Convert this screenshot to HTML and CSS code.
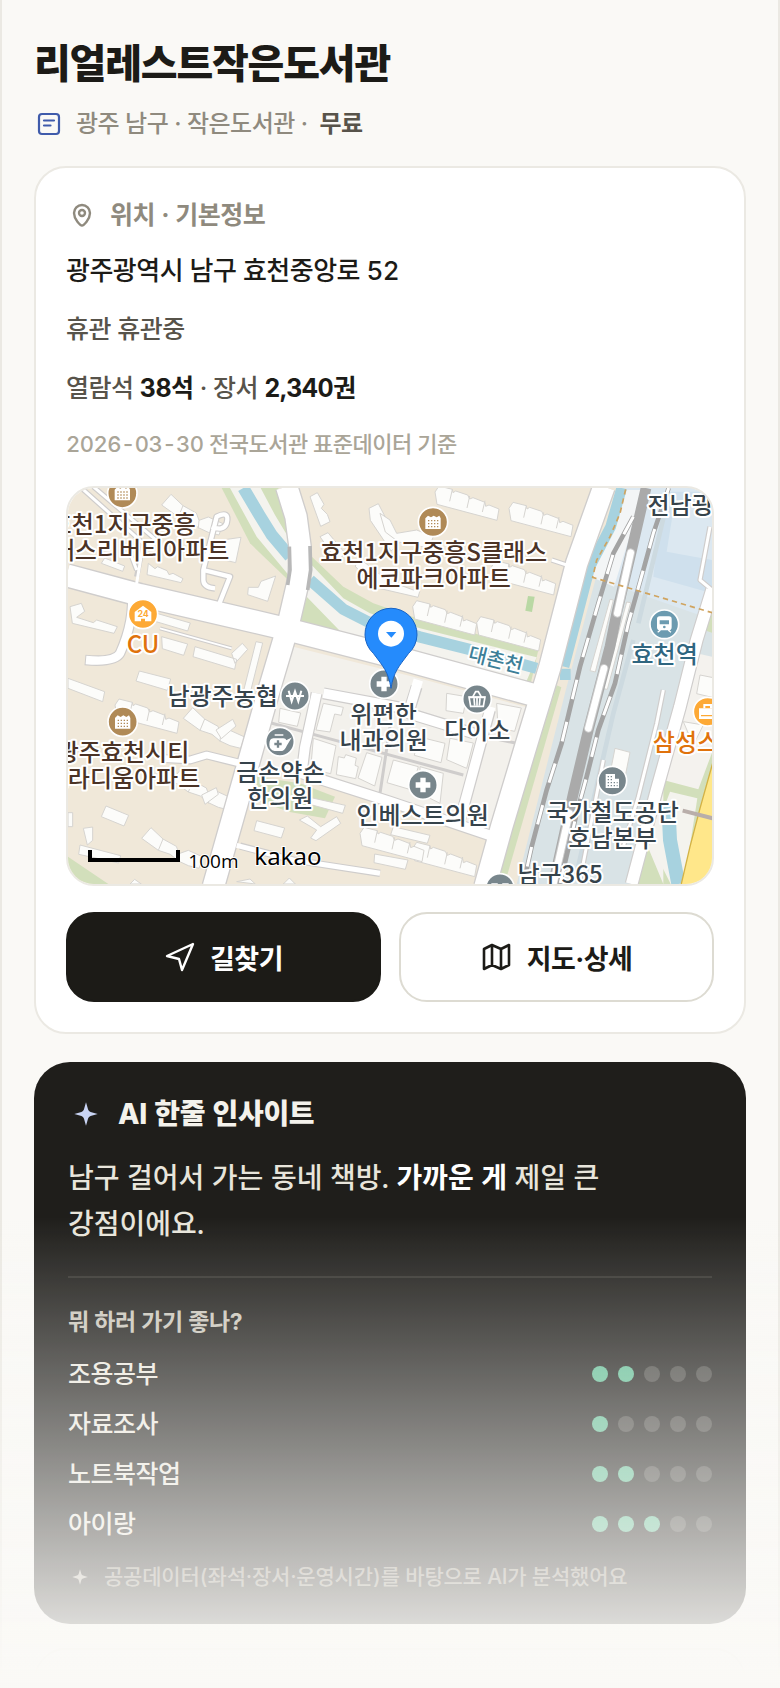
FILE: index.html
```html
<!DOCTYPE html>
<html lang="ko">
<head>
    <meta charset="UTF-8">
    <meta name="viewport" content="width=device-width, initial-scale=1">
    <title>리얼레스트작은도서관</title>
    <link rel="stylesheet" href="styles.css">
</head>
<body>
<main class="page">
    <h1 class="title">리얼레스트작은도서관</h1>
    <div class="sub">
        <svg class="sub_icon" viewBox="0 0 30 30" fill="none" stroke="#3f5bab" stroke-width="2.200" stroke-linecap="round">
            <rect x="5" y="5" width="20" height="20" rx="3"/>
            <path d="M10 11.500h10M10 16.500h6.500"/>
        </svg>
        <span>광주 남구 · 작은도서관 ·&nbsp; <b class="free">무료</b></span>
    </div>

    <section class="card">
        <h2 class="card_head">
            <svg class="head_icon" viewBox="0 0 32 32" fill="none" stroke="#8f8a7e" stroke-width="2.400">
                <path d="M16 26.500c-1.500 0-8-6-8-12.500a8 8 0 0 1 16 0c0 6.500-6.500 12.500-8 12.500z"/>
                <circle cx="16" cy="14" r="3"/>
            </svg>
            위치 · 기본정보
        </h2>
        <p class="line address">광주광역시 남구 효천중앙로 52</p>
        <p class="line">휴관 휴관중</p>
        <p class="line">열람석 <b>38석</b> · 장서 <b>2,340권</b></p>
        <p class="date">2026-03-30 전국도서관 표준데이터 기준</p>

        <div class="map">
            <svg class="map_svg" viewBox="24 24 1932 1188">
                <defs>
                    <g id="apt">
                        <circle r="44" fill="#b08a57" stroke="#fff" stroke-width="5"/>
                        <path d="M-23 21v-32l8-8 9 5 8-5 9 5 8-5 4 8v32z" fill="#fff"/>
                        <path d="M-15-4h32M-15 5h32M-15 14h32" stroke="#b08a57" stroke-width="4" stroke-dasharray="4 5"/>
                    </g>
                    <g id="plus">
                        <circle r="43" fill="#78868c" stroke="#fff" stroke-width="5"/>
                        <path d="M0-22v44M-22 0h44" stroke="#fff" stroke-width="16"/>
                    </g>
                    <path id="houses" d="M0 0l12-18 40 10 2 10 8-5 36 12 6 12 10-4 36 14 2 12 10-4 30 12-6 34-180-48zM52-8l-8 36M104 12l-8 36M150 26l-8 34"/>
                    <path id="cluster" d="M0 0l28-32 36 34 40 22 8 22 28-10 44 20-12 34-32-8-30-14-24-20-36-12zM64 2l-14 34M112 46l-2 24"/>
                </defs>
                <rect x="0" y="0" width="2000" height="1300" fill="#f0e8d9"/>

                <!-- stream and banks, west of the railway -->
                <path d="M485 24H655L700 220 690 305 570 190z" fill="#d2dfbb"/>
                <path d="M510 24H602L645 105 690 180V290L590 170z" fill="#f4f3ee"/>
                <path d="M550 24L598 105 635 165 690 230" fill="none" stroke="#a7d2df" stroke-width="36"/>
                <path d="M750 225L850 320 940 370 1070 415 1435 510 1410 620 900 490 715 436 750 320z" fill="#d2dfbb"/>
                <path d="M755 255L850 355 930 400 1080 445 1430 532 1400 602 950 486 845 458 735 345z" fill="#f4f3ee"/>
                <path d="M750 300L850 388 925 426 1080 471 1235 510 1430 565" fill="none" stroke="#a7d2df" stroke-width="34"/>
                <path d="M24 1130L145 1212H24z" fill="#d2dfbb"/>

                <!-- railway and campus ground -->
                <path d="M1680 24H1960V700L1800 1212H1370L1520 620z" fill="#d9e3e6"/>
                <path d="M1697 24H1960V420L1596 292z" fill="#dce8f1"/>
                <path d="M1697 30h55l-90 290-66-28z" fill="#f3f5f6"/>
                <path d="M1810 35H1956V340L1780 290z" fill="#cfe0ed"/>
                <path d="M1845 60H1956V240L1820 215z" fill="#dce8f1"/>
                <path d="M1810 115L1735 430M1720 480L1660 700 1550 1180" fill="none" stroke="#cddae0" stroke-width="14"/>
                <path d="M1685 24L1652 140 1590 260 1512 560" fill="none" stroke="#a7d2df" stroke-width="32"/>
                <path d="M1500 583h32" stroke="#a7d2df" stroke-width="34"/>
                <path d="M1490 616l14 6-170 590h-30z" fill="#d2dfbb"/>

                <!-- blocks on the south east -->
                <path d="M1910 520L1956 530V1212H1730z" fill="#f4f2ee"/>
                <path d="M1810 900l105 28 41-110v80l-80 314H1730l30-120 50 120z" fill="#d2dfbb"/>
                <path d="M1830 935l82 20-40 257h-40l-60-120z" fill="#f4f3ee"/>
                <path d="M1825 975L1830 1080 1855 1212" fill="none" stroke="#a7d2df" stroke-width="42"/>
                <path d="M1962 835L1920 985 1890 1100 1862 1220H1962z" fill="#ffe78a" stroke="#d3b246" stroke-width="4"/>
                <path d="M1868 992l95 24" stroke="#b9aeaa" stroke-width="12"/>
                <path d="M1945 400l15-10v70l-28-10z" fill="#d2dfbb"/>

                <!-- centre block -->
                <path d="M700 500L1060 590 1412 685 1290 1050 1000 955 560 848z" fill="#f3f1ec"/>
                <path d="M590 890l130 20 105 40-30 65-110-20-95-35z" fill="#d2dfbb"/>
                <path d="M600 720L860 790 1210 885M990 740L960 940M1180 750l190 40" fill="none" stroke="#cfcdcc" stroke-width="9"/>

                <!-- buildings -->
                <g fill="#fcfcfa" stroke="#d6d4d0" stroke-width="3">
                    <use href="#houses" x="1125" y="36"/>
                    <use href="#houses" x="1347" y="85"/>
                    <use href="#houses" x="1295" y="260"/>
                    <use href="#houses" x="1058" y="380"/>
                    <use href="#houses" x="1250" y="428"/>
                    <use href="#houses" x="165" y="675"/>
                    <use href="#houses" x="1058" y="1105"/>
                    <use href="#houses" x="900" y="1060"/>
                    <use href="#cluster" x="305" y="75"/>
                    <use href="#cluster" x="370" y="715"/>
                    <use href="#cluster" x="245" y="1075"/>
                    <use href="#cluster" x="335" y="900"/>
                    <path d="M750 50l22-12 20 35-8 12 18 18 8 22-28 14zM927 85l28-14 62 120-24 22-62-92zM780 170l24-12 50 60-20 30z"/>
                    <path d="M885 258l20-18 75 60 80 30 24-12-10 34-130-30zM960 100l30 20 20 40 60-10 50 20-14 34-90-18-40-30z"/>
                    <path d="M487 180l56-8-16 76-50-12zM565 322l30 0 8-18 44-16-24 76-60-20zM124 250l10-16 60 24-6 16z"/>
                    <path d="M30 380l34-10 10 24-24 18 50 16 10-8 62 20-10 20-125-30zM273 395l118 34-8 24-115-34z"/>
                    <path d="M265 250l20 16 8-6 28 12 6 12 12-4 30 16-6 12-102-24zM305 470l78 22-12 34-64-20zM405 500l125 38-6 30-125-38zM515 520l32-30 16 18-38 42z"/>
                    <path d="M588 485l20 4-40 160-20-6zM238 573l94 24-10 34-94-28zM24 595l110 40-6 30-104-40z"/>
                    <path d="M468 750l50-32 10 20-44 38zM425 945l44-22 6 20-40 30zM138 978l68 28-14 32-68-28zM70 1045l28-4v40l-16 14zM24 998h14v42H24z"/>
                    <path d="M590 1022l84 22-10 30-82-22zM718 1020l24-12 40 32 48-30 12 20-74 52-16-8 18-24zM740 950l116 26-8 24-110-30z"/>
                    <path d="M60 1095l122 32-6 22-120-26zM944 1122l100 18-8 28-94-20z"/>
                    <path d="M660 685l62 14-10 40-56-12zM790 670l60 12-6 24-20-4-14 54-42-6zM760 775l68 22-16 84-60-14zM835 830l18 4 4-10 32 10-4 22 10 4-8 36-58-12z"/>
                    <path d="M920 818l46 14-22 86-50-24zM1000 840l75 20-20 70-74-22zM1080 860l70 20-10 90-60-30zM1075 770l80 20-12 58-80-22zM1160 640l60 10-10 50-52-8z"/>
                    <path d="M1310 670l74 14-20 70-50-10zM1170 775l70 14-20 76-60-26zM1000 1040l110 26-8 24-110-26z"/>
                    <path d="M1665 805l45 12-22 110-45-10zM1650 358l10 2-54 216-16-4zM1700 366l12 2-70 260-12-2z"/>
                    <path d="M530 1205l40-8 16 15zM670 1212l18-18 18 18zM210 1212l14-14 20 14zM1920 585l40 8v60l-50-12zM1870 725l60 10-30 60z"/>
                </g>
                <path d="M1404 348l20 2-8 46-20-4z" fill="#b9d8a4"/>

                <!-- road outlines, then the white surface -->
                <g fill="none" stroke="#cfcdcc" stroke-linejoin="round">
                    <path d="M20 286L240 345 650 440 1000 530 1440 650" stroke-width="74"/>
                    <path d="M680 20L708 110 720 200 718 290 682 445 630 620 565 850 460 1220" stroke-width="72"/>
                    <path d="M1632 20L1550 250 1470 560 1400 790 1325 1040 1275 1220" stroke-width="72"/>
                    <path d="M215 330Q225 420 180 520Q165 548 75 540" stroke-width="32"/>
                    <path d="M540 850L440 825 390 840 300 835" stroke-width="27"/>
                    <path d="M770 640L735 800 725 880 990 965 1300 1070M790 640L1060 690M1070 620L1045 700 1240 760M1290 690L1200 1020" stroke-width="36"/>
                    <path d="M540 1098L700 1140 960 1180" stroke-width="22"/>
                    <path d="M470 390L510 290 430 270V300Q430 322 465 325M430 270L470 110Q510 90 500 130 490 155 455 140" stroke-width="20"/>
                    <path d="M60 20L250 190 230 290M230 270L215 230M100 20L300 190" stroke-width="16"/>
                    <path d="M1956 330L1910 480 1860 680 1790 930 1715 1212" stroke-width="42"/>
                    <path d="M1810 630L1790 730 1735 950 1690 1100M1630 840L1560 1200M1950 140L1920 300 1956 330M1475 240L1520 255" stroke-width="16"/>
                </g>
                <g fill="none" stroke="#fff" stroke-linejoin="round">
                    <path d="M20 286L240 345 650 440 1000 530 1440 650" stroke-width="66"/>
                    <path d="M680 20L708 110 720 200 718 290 682 445 630 620 565 850 460 1220" stroke-width="64"/>
                    <path d="M1632 20L1550 250 1470 560 1400 790 1325 1040 1275 1220" stroke-width="64"/>
                    <path d="M215 325Q225 420 180 520Q165 548 78 540" stroke-width="25"/>
                    <path d="M550 852L440 825 390 840 300 835" stroke-width="20"/>
                    <path d="M770 640L735 800 725 880 990 965 1310 1073M790 640L1060 690M1075 600L1045 700 1240 760M1292 680L1200 1020" stroke-width="29"/>
                    <path d="M530 1096L700 1140 960 1180" stroke-width="15"/>
                    <path d="M468 396L510 290 430 270V300Q430 322 465 325M430 270L470 110Q510 90 500 130 490 155 455 140" stroke-width="13"/>
                    <path d="M60 20L250 190 230 310M230 270L215 230M100 20L300 190" stroke-width="9"/>
                    <path d="M1956 330L1910 480 1860 680 1790 930 1715 1212" stroke-width="35"/>
                    <path d="M1810 630L1790 730 1735 950 1690 1100M1630 840L1560 1200M1950 140L1920 300 1956 330M1475 240L1520 255" stroke-width="9"/>
                </g>
                <path d="M688 200L690 270 683 315M750 198L752 270 743 330" fill="none" stroke="#b8b8b8" stroke-width="11"/>
                <path d="M300 445L515 505" stroke="#cfcdcc" stroke-width="12"/>
                <path d="M300 445L515 505" stroke="#fff" stroke-width="5"/>

                <!-- rails -->
                <g fill="none">
                    <path d="M1758 24L1715 210 1670 400 1650 500 1585 750 1540 940 1480 1212" stroke="#aaa" stroke-width="32"/>
                    <path d="M1712 218L1672 400M1632 565L1585 745M1528 1000L1480 1212" stroke="#ccc" stroke-width="26" stroke-linecap="round"/>
                    <path d="M1712 218L1672 400M1632 565L1585 745M1528 1000L1480 1212" stroke="#fff" stroke-width="20" stroke-linecap="round"/>
                    <path d="M1720 110L1660 220 1615 370 1560 560 1505 790 1460 930 1415 1100 1390 1212M1826 24L1780 160 1750 270 1705 430 1665 610 1615 750 1580 890 1550 1000 1500 1212" stroke="#a3a3a3" stroke-width="14"/>
                    <path d="M1720 110L1660 220 1615 370 1560 560 1505 790 1460 930 1415 1100 1390 1212M1826 24L1780 160 1750 270 1705 430 1665 610 1615 750 1580 890 1550 1000 1500 1212" stroke="#fff" stroke-width="9" stroke-dasharray="60 70"/>
                    <path d="M1697 28L1680 100 1650 170 1610 240 1598 292 1956 398" stroke="#d0a460" stroke-width="5" stroke-dasharray="16 12"/>
                </g>

                <!-- place marks -->
                <use href="#apt" x="187" y="40"/>
                <use href="#apt" x="1119" y="126"/>
                <use href="#apt" x="188" y="725"/>
                <use href="#plus" x="972" y="612"/>
                <use href="#plus" x="1089" y="915"/>
                <g transform="translate(249 402)">
                    <circle r="44" fill="#fda935" stroke="#fff" stroke-width="5"/>
                    <path d="M-25 22v-28L0-25 25-6v28H6V14H-6v8z" fill="#fff"/>
                    <text class="mark_24" y="10">24</text>
                </g>
                <g transform="translate(705 648)">
                    <circle r="43" fill="#78868c" stroke="#fff" stroke-width="5"/>
                    <path d="M-19-16l9 32L0-14l10 30 9-32M-27 0h54" fill="none" stroke="#fff" stroke-width="6"/>
                </g>
                <g transform="translate(660 785)">
                    <circle r="43" fill="#78868c" stroke="#fff" stroke-width="5"/>
                    <path d="M-20-8h30q6 0 8 6l12-6-12 20q-6 14-14 14h-20q-14-2-14-18 0-16 10-16zM-16-20H10" fill="#fff" stroke="#fff" stroke-width="4"/>
                    <path d="M-6-4v22M-17 7H5" stroke="#78868c" stroke-width="7"/>
                </g>
                <g transform="translate(1251 657)">
                    <circle r="43" fill="#78868c" stroke="#fff" stroke-width="5"/>
                    <path d="M-24-6h48l-5 28h-38zM-14-4L-4-22H4L14-4" fill="none" stroke="#fff" stroke-width="5"/>
                    <path d="M-9-2l2 22M0-2v22M9-2L7 20M-24-5h48" stroke="#fff" stroke-width="5"/>
                </g>
                <g transform="translate(1657 902)">
                    <circle r="43" fill="#78868c" stroke="#fff" stroke-width="5"/>
                    <path d="M-20 22v-42H8v14h12v28z" fill="#fff"/>
                    <path d="M-14-12H4M-14-3H4M-14 6h30M-14 15h30" stroke="#78868c" stroke-width="4" stroke-dasharray="4 5"/>
                </g>
                <g transform="translate(1813 433)">
                    <circle r="43" fill="#6c9bb0" stroke="#fff" stroke-width="5"/>
                    <path d="M-14-22h28q6 0 6 6v24q0 8-7 8h-26q-7 0-7-8v-24q0-6 6-6zM-12 18l-8 6M12 18l8 6" fill="#fff" stroke="#fff" stroke-width="4"/>
                    <path d="M-14-12h28v12h-28z" fill="#6c9bb0"/>
                    <circle cy="8" r="4" fill="#6c9bb0"/>
                </g>
                <g transform="translate(1943 695)">
                    <circle r="43" fill="#fda935" stroke="#fff" stroke-width="5"/>
                    <path d="M-10-10v-10h20v10" fill="none" stroke="#fff" stroke-width="6"/>
                    <path d="M-26-10h52v32h-52z" fill="#fff"/>
                    <path d="M-20 12h40" stroke="#fda935" stroke-width="4"/>
                </g>
                <g transform="translate(1320 1224)">
                    <circle r="43" fill="#78868c" stroke="#fff" stroke-width="5"/>
                    <path d="M-26-14h18l8 6 8-6h18v20h-52z" fill="#fff"/>
                </g>

                <g class="label brown">
                    <text x="188" y="158">효천1지구중흥</text>
                    <text x="188" y="236">S클래스리버티아파트</text>
                    <text x="1121" y="244">효천1지구중흥S클래스</text>
                    <text x="1121" y="322">에코파크아파트</text>
                    <text x="189" y="844">광주효천시티</text>
                    <text x="189" y="922">프라디움아파트</text>
                </g>
                <g class="label slate">
                    <text x="488" y="674">남광주농협</text>
                    <text x="971" y="728">위편한</text>
                    <text x="971" y="806">내과의원</text>
                    <text x="1252" y="776">다이소</text>
                    <text x="661" y="904">금손약손</text>
                    <text x="661" y="982">한의원</text>
                    <text x="1088" y="1032">인베스트의원</text>
                    <text x="1658" y="1022">국가철도공단</text>
                    <text x="1658" y="1100">호남본부</text>
                    <text x="1500" y="1210">남구365</text>
                    <text x="1895" y="103">전남광주</text>
                </g>
                <g class="label orange">
                    <text x="249" y="519">CU</text>
                    <text x="1944" y="814">삼성스토어</text>
                </g>
                <text class="label teal" x="1814" y="550">효천역</text>
                <text class="label water" transform="translate(1302 560) rotate(14)">대촌천</text>

                <!-- selected place -->
                <path d="M993 625C985 575 970 560 940 520A78 78 0 1 1 1046 520C1016 560 1001 575 993 625z" fill="#258bfc" stroke="#1763c6" stroke-width="3"/>
                <circle cx="993" cy="461" r="39" fill="#fff"/>
                <path d="M978 456h31l-15 17z" fill="#258bfc"/>

                <path d="M90 1110v30h264v-30" fill="none" stroke="#000" stroke-width="12"/>
                <text class="scale" x="385" y="1163">100m</text>
                <text class="kakao" x="583" y="1156">kakao</text>
            </svg>
        </div>

        <div class="actions">
            <button class="btn btn_dark" type="button">
                <svg class="btn_icon" viewBox="0 0 32 32" fill="none" stroke="#fff" stroke-width="2.400" stroke-linejoin="round">
                    <path d="M29 3L3 15l12 3 3 11z"/>
                </svg>
                길찾기
            </button>
            <button class="btn" type="button">
                <svg class="btn_icon" viewBox="0 0 32 32" fill="none" stroke="#1c1b17" stroke-width="2.600" stroke-linejoin="round">
                    <path d="M3 8l8-4 9 4 8-4v20l-8 4-9-4-8 4zM11 4v20M20 8v20"/>
                </svg>
                지도·상세
            </button>
        </div>
    </section>

    <section class="insight">
        <h2 class="insight_head">
            <svg class="star" viewBox="0 0 36 36" fill="#c9d4f4">
                <path d="M18 4l2.500 8.500q.7 2.300 3 3L32 18l-8.500 2.500q-2.300.7-3 3L18 32l-2.500-8.500q-.7-2.300-3-3L4 18l8.500-2.500q2.300-.7 3-3z"/>
            </svg>
            AI 한줄 인사이트
        </h2>
        <p class="insight_text">남구 걸어서 가는 동네 책방. <b>가까운 게</b> 제일 큰 강점이에요.</p>
        <h3 class="fit_head">뭐 하러 가기 좋나?</h3>
        <ul class="fit">
            <li class="fit_row">조용공부 <span class="dots"><i class="dot on"></i><i class="dot on"></i><i class="dot"></i><i class="dot"></i><i class="dot"></i></span></li>
            <li class="fit_row">자료조사 <span class="dots"><i class="dot on"></i><i class="dot"></i><i class="dot"></i><i class="dot"></i><i class="dot"></i></span></li>
            <li class="fit_row">노트북작업 <span class="dots"><i class="dot on"></i><i class="dot on"></i><i class="dot"></i><i class="dot"></i><i class="dot"></i></span></li>
            <li class="fit_row">아이랑 <span class="dots"><i class="dot on"></i><i class="dot on"></i><i class="dot on"></i><i class="dot"></i><i class="dot"></i></span></li>
        </ul>
        <p class="source">
            <svg class="source_star" viewBox="0 0 36 36" fill="#b5b1a6">
                <path d="M18 4l2.500 8.500q.7 2.300 3 3L32 18l-8.500 2.500q-2.300.7-3 3L18 32l-2.500-8.500q-.7-2.300-3-3L4 18l8.500-2.500q2.300-.7 3-3z"/>
            </svg>
            공공데이터(좌석·장서·운영시간)를 바탕으로 AI가 분석했어요
        </p>
    </section>

    <section class="card next"></section>
</main>
<div class="fade"></div>
</body>
</html>
```
FILE: styles.css
```css
*{
    box-sizing: border-box;
}
body{
    margin: 0;
    background-color: #faf9f6;
    color: #1c1b17;
    font-family: Inter, "Noto Sans CJK KR", sans-serif;
    font-size: 25px;
    font-weight: 500;
    font-variant-numeric: tabular-nums;
}
h1, h2, h3, p, ul{
    margin: 0;
    padding: 0;
}
.page{
    height: 100vh;
    overflow: hidden;
    padding: 38px 32px 0;
    border-left: 2px solid #ebe9e3;
    border-right: 2px solid #ebe9e3;
    letter-spacing: -0.02em;
}
.title{
    font-size: 40px;
    line-height: 52px;
    font-weight: 800;
    letter-spacing: -0.03em;
}
.sub{
    display: flex;
    align-items: center;
    gap: 12px;
    margin-top: 16px;
    font-size: 24px;
    line-height: 36px;
    color: #8f8a7e;
}
.sub_icon{
    width: 30px;
    height: 30px;
}
.free{
    font-weight: 600;
    color: #57534a;
}
.card{
    margin-top: 24px;
    padding: 30px;
    border: 2px solid #ebe9e3;
    border-radius: 32px;
    background-color: #fff;
}
.card_head{
    display: flex;
    align-items: center;
    gap: 12px;
    margin-bottom: 9px;
    font-size: 25px;
    line-height: 34px;
    font-weight: 700;
    color: #8f8a7e;
}
.head_icon{
    width: 32px;
    height: 32px;
}
.line{
    line-height: 59px;
    color: #57534a;
}
.line b{
    font-weight: 700;
    color: #1c1b17;
}
.address{
    font-size: 26px;
    color: #1c1b17;
}
.date{
    margin-top: 9px;
    font-size: 22px;
    line-height: 34px;
    color: #aaa598;
}
.map{
    margin-top: 25px;
    border: 2px solid #ebe9e3;
    border-radius: 28px;
    overflow: hidden;
}
.map_svg{
    display: block;
    width: 100%;
}
.label{
    font-family: "Noto Sans CJK KR", sans-serif;
    font-size: 72px;
    font-weight: 500;
    letter-spacing: 0;
    text-anchor: middle;
    paint-order: stroke;
    stroke: #fff;
    stroke-width: 12px;
    stroke-linejoin: round;
}
.brown{
    fill: #4b3326;
}
.slate{
    fill: #36434b;
}
.orange{
    fill: #e0720c;
}
.teal{
    fill: #2f6680;
}
.water{
    fill: #3d7f98;
    font-size: 60px;
}
.mark_24{
    font-size: 26px;
    font-weight: 700;
    letter-spacing: 0;
    text-anchor: middle;
    fill: #fda935;
}
.scale{
    font-family: "Open Sans", sans-serif;
    font-size: 57px;
    font-weight: 400;
    letter-spacing: 0;
    paint-order: stroke;
    stroke: #fff;
    stroke-width: 6px;
}
.kakao{
    font-family: "Noto Sans", sans-serif;
    font-size: 72px;
    font-weight: 400;
    letter-spacing: 0;
    paint-order: stroke;
    stroke: #fff;
    stroke-width: 6px;
}
.actions{
    display: grid;
    grid-template-columns: 1fr 1fr;
    gap: 18px;
    margin-top: 26px;
}
.btn{
    display: flex;
    align-items: center;
    justify-content: center;
    gap: 14px;
    height: 90px;
    border: 2px solid #dddbd2;
    border-radius: 28px;
    background-color: #fff;
    color: #1c1b17;
    font-family: inherit;
    font-size: 27px;
    font-weight: 700;
    letter-spacing: -0.02em;
}
.btn_dark{
    border-color: #1c1b17;
    background-color: #1c1b17;
    color: #fff;
}
.btn_icon{
    width: 32px;
    height: 32px;
}
.insight{
    margin-top: 28px;
    padding: 35px 34px 32px;
    border-radius: 36px;
    background-color: #1f1e1b;
    color: #f4f2ec;
}
.insight_head{
    display: flex;
    align-items: center;
    gap: 14px;
    font-size: 28px;
    line-height: 34px;
    font-weight: 800;
    letter-spacing: -0.01em;
}
.star{
    width: 36px;
    height: 30px;
}
.insight_text{
    margin-top: 24px;
    padding-bottom: 29px;
    border-bottom: 2px solid #34332f;
    font-size: 28px;
    line-height: 46px;
    letter-spacing: 0;
    word-break: keep-all;
    color: #e8e5db;
}
.insight_text b{
    color: #fff;
}
.fit_head{
    margin: 27px 0 10px;
    font-size: 23px;
    line-height: 34px;
    font-weight: 700;
    color: #c9c5ba;
}
.fit{
    list-style: none;
}
.fit_row{
    display: flex;
    align-items: center;
    justify-content: space-between;
    height: 50px;
    padding-bottom: 4px;
    color: #ece9e0;
}
.dots{
    display: flex;
    gap: 10px;
    margin-top: 4px;
}
.dot{
    width: 16px;
    height: 16px;
    border-radius: 50%;
    background-color: #474642;
}
.dot.on{
    background-color: #62bd95;
}
.source{
    display: flex;
    align-items: center;
    gap: 12px;
    margin-top: 13px;
    font-size: 21px;
    line-height: 30px;
    letter-spacing: -0.01em;
    color: #8f8a7e;
}
.source_star{
    width: 24px;
    height: 20px;
}
.next{
    height: 200px;
}
/* fades the bottom of the page into the background */
.fade{
    position: fixed;
    left: 0;
    right: 0;
    bottom: 0;
    height: 28vh;
    background: linear-gradient(rgba(250, 249, 246, 0), #faf9f6);
    pointer-events: none;
}
```
